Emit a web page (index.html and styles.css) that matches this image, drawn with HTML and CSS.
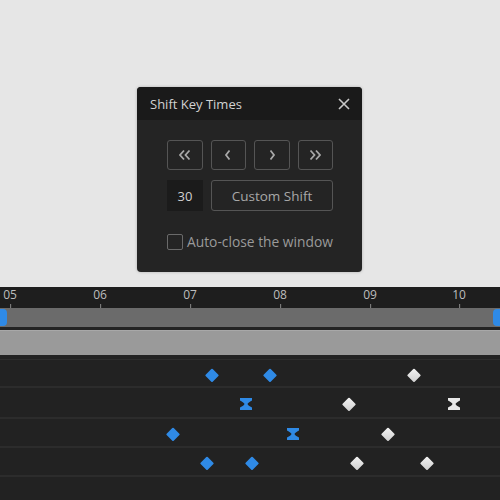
FILE: index.html
```html
<!DOCTYPE html>
<html>
<head>
<meta charset="utf-8">
<link rel="stylesheet" href="styles.css">
</head>
<body>
<div class="stage">
  <div class="dialog">
    <div class="dlg-head">
      <span class="dlg-title">Shift Key Times</span>
      <svg class="close" width="12" height="12" viewBox="0 0 12 12"><path d="M1 1L11 11M11 1L1 11" stroke="#c8c8c8" stroke-width="1.6" fill="none"/></svg>
    </div>
    <div class="dlg-body">
      <div class="nav">
        <button class="btn"><svg width="14" height="12" viewBox="0 0 14 12"><path d="M6 1.5L2 6L6 10.5M11.5 1.5L7.5 6L11.5 10.5" stroke="#a8a8a8" stroke-width="1.8" fill="none"/></svg></button>
        <button class="btn"><svg width="8" height="12" viewBox="0 0 8 12"><path d="M5.5 1.5L2 6L5.5 10.5" stroke="#a8a8a8" stroke-width="1.8" fill="none"/></svg></button>
        <button class="btn"><svg width="8" height="12" viewBox="0 0 8 12"><path d="M2.5 1.5L6 6L2.5 10.5" stroke="#a8a8a8" stroke-width="1.8" fill="none"/></svg></button>
        <button class="btn"><svg width="14" height="12" viewBox="0 0 14 12"><path d="M2.5 1.5L6.5 6L2.5 10.5M8 1.5L12 6L8 10.5" stroke="#a8a8a8" stroke-width="1.8" fill="none"/></svg></button>
      </div>
      <div class="shift-row">
        <div class="num">30</div>
        <button class="btn wide">Custom Shift</button>
      </div>
      <label class="check"><span class="box"></span>Auto-close the window</label>
    </div>
  </div>
</div>
<div class="timeline">
  <div class="ruler">
    <span class="lbl" style="left:10px">05</span>
    <span class="lbl" style="left:100px">06</span>
    <span class="lbl" style="left:190px">07</span>
    <span class="lbl" style="left:280px">08</span>
    <span class="lbl" style="left:370px">09</span>
    <span class="lbl" style="left:459px">10</span>
  </div>
  <div class="range">
    <span class="handle left"></span>
    <span class="handle right"></span>
  </div>
  <div class="band"></div>
  <div class="rows">
    <div class="row r1">
      <span class="key dia blue" style="left:212px"></span>
      <span class="key dia blue" style="left:270px"></span>
      <span class="key dia white" style="left:414px"></span>
    </div>
    <div class="row r2">
      <svg class="key hg" style="left:246px" width="12" height="12" viewBox="0 0 12 12"><path d="M0 0H12V2.5Q8 4.5 7.5 6Q8 7.5 12 9.5V12H0V9.5Q4 7.5 4.5 6Q4 4.5 0 2.5Z" fill="#2f8ae6"/></svg>
      <span class="key dia white" style="left:349px"></span>
      <svg class="key hg" style="left:454px" width="12" height="12" viewBox="0 0 12 12"><path d="M0 0H12V2.5Q8 4.5 7.5 6Q8 7.5 12 9.5V12H0V9.5Q4 7.5 4.5 6Q4 4.5 0 2.5Z" fill="#e8e8e8"/></svg>
    </div>
    <div class="row r3">
      <span class="key dia blue" style="left:173px"></span>
      <svg class="key hg" style="left:293px" width="12" height="12" viewBox="0 0 12 12"><path d="M0 0H12V2.5Q8 4.5 7.5 6Q8 7.5 12 9.5V12H0V9.5Q4 7.5 4.5 6Q4 4.5 0 2.5Z" fill="#2f8ae6"/></svg>
      <span class="key dia white" style="left:388px"></span>
    </div>
    <div class="row r4">
      <span class="key dia blue" style="left:207px"></span>
      <span class="key dia blue" style="left:252px"></span>
      <span class="key dia white" style="left:357px"></span>
      <span class="key dia white" style="left:427px"></span>
    </div>
    <div class="row r5"></div>
  </div>
</div>
</body>
</html>
```
FILE: styles.css
```css
html, body {
  margin: 0;
  padding: 0;
  width: 500px;
  height: 500px;
  overflow: hidden;
  background: #e6e6e6;
  font-family: "Open Sans", "Noto Sans", sans-serif;
}
.stage {
  height: 287px;
  padding: 87px 0 0 137px;
  box-sizing: border-box;
}
.dialog {
  width: 225px;
  height: 185px;
  background: #242424;
  border-radius: 4px;
  overflow: hidden;
  box-shadow: 0 0 3px rgba(0,0,0,0.25);
}
.dlg-head {
  height: 33px;
  background: #1a1a1a;
  display: flex;
  align-items: center;
  justify-content: space-between;
  padding: 0 12px 0 13px;
}
.dlg-title {
  color: #d2d2d2;
  font-size: 13px;
}
.close { display: block; }
.dlg-body {
  padding: 20px 29px 0 30px;
}
.nav {
  display: grid;
  grid-template-columns: repeat(4, 1fr);
  gap: 8px;
}
.btn {
  height: 30px;
  margin: 0;
  padding: 0;
  background: transparent;
  border: 1.5px solid #555;
  border-radius: 3px;
  display: flex;
  align-items: center;
  justify-content: center;
  color: #a8a8a8;
  font-family: "Open Sans", "Noto Sans", sans-serif;
  font-size: 13.5px;
  box-sizing: border-box;
}
.shift-row {
  display: flex;
  gap: 8px;
  margin-top: 10px;
}
.num {
  width: 36px;
  height: 31px;
  background: #1b1b1b;
  color: #d0d0d0;
  font-size: 13px;
  display: flex;
  align-items: center;
  justify-content: center;
}
.wide {
  flex: 1;
  height: 31px;
}
.check {
  display: flex;
  align-items: center;
  gap: 4px;
  margin-top: 21px;
  color: #9a9a9a;
  font-size: 13.8px;
}
.box {
  width: 14px;
  height: 14px;
  border: 1.5px solid #6a6a6a;
  border-radius: 2px;
}
.timeline {
  height: 213px;
  background: #232323;
}
.ruler {
  position: relative;
  height: 21px;
  background: #1e1e1e;
}
.lbl {
  position: absolute;
  top: 1px;
  transform: translateX(-50%);
  color: #bdbdbd;
  font-size: 12px;
  line-height: 14px;
}
.lbl::after {
  content: "";
  position: absolute;
  left: 50%;
  top: 16px;
  width: 1px;
  height: 5px;
  background: #888;
}
.range {
  position: relative;
  height: 19px;
  background: #6b6b6b;
}
.handle {
  position: absolute;
  top: 1px;
  width: 7px;
  height: 17px;
  background: #2f8ae6;
}
.handle.left { left: 0; border-radius: 0 4px 4px 0; }
.handle.right { right: 0; border-radius: 4px 0 0 4px; }
.band {
  height: 25px;
  margin-top: 3px;
  background: #9a9a9a;
  border-top: 1px solid #a8a8a8;
  box-sizing: border-box;
}
.rows {
  margin-top: 4px;
  border-top: 1px solid #2e2e2e;
}
.row {
  position: relative;
  background: #222;
  border-bottom: 2px solid #2c2c2c;
}
.r1 { height: 26px; }
.r2 { height: 29px; }
.r3 { height: 27px; }
.r4 { height: 27px; }
.r5 { height: 30px; border-bottom: none; }
.key {
  position: absolute;
  top: calc(50% + 1.5px);
}
.dia {
  width: 9.5px;
  height: 9.5px;
  transform: translate(-50%, -50%) rotate(45deg);
  border-radius: 1px;
}
.dia.blue { background: #2f8ae6; }
.dia.white { background: linear-gradient(135deg, #f4f4f4, #cfcfcf); }
.hg {
  transform: translate(-50%, -50%);
  display: block;
}
```
